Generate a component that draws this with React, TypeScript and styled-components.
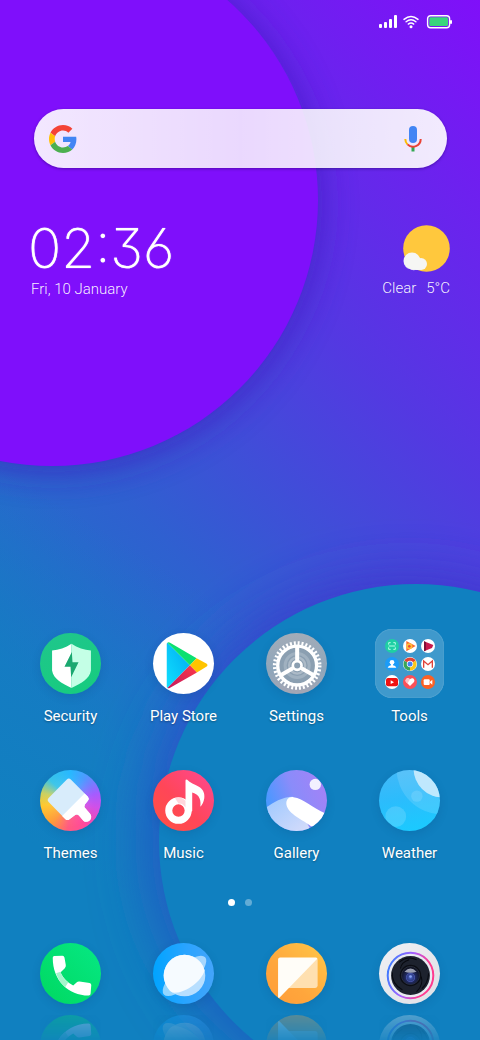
import React from 'react';
import styled, { createGlobalStyle } from 'styled-components';

const GlobalStyle = createGlobalStyle`
  *, *::before, *::after { box-sizing: border-box; }
  body { margin: 0; background: #1080c0; font-family: Roboto, 'Liberation Sans', sans-serif; color: #fff; }
  button { font: inherit; color: inherit; background: none; border: 0; padding: 0; cursor: pointer; }
  svg { display: block; }
`;

const Screen = styled.main`
  position: relative;
  min-height: 100vh;
  overflow: hidden;
  display: flex;
  flex-direction: column;
  isolation: isolate;
`;

const WallpaperArt = styled.svg`
  position: absolute;
  inset: 0;
  width: 100%;
  height: 100%;
  z-index: -1;
`;

const StatusBar = styled.header`
  height: 44px;
  padding: 0 28px;
  display: flex;
  justify-content: flex-end;
  align-items: center;
`;

const SearchBar = styled.form`
  margin: 65px 33px 0 34px;
  height: 59px;
  padding: 0 19px 0 15px;
  display: flex;
  align-items: center;
  border-radius: 30px;
  background: linear-gradient(90deg, rgba(255, 255, 255, 0.9), rgba(255, 255, 255, 0.84) 50%, rgba(255, 255, 255, 0.91));
  box-shadow: 0 1px 3px rgba(30, 0, 90, 0.45);
`;

const SearchInput = styled.input`
  flex: 1;
  min-width: 0;
  height: 100%;
  padding: 0 12px;
  border: 0;
  outline: 0;
  background: transparent;
  color: #333;
  font: 400 18px/24px Roboto, sans-serif;
`;

const Widgets = styled.section`
  margin-top: 47px;
  padding: 0 30px;
  display: flex;
  justify-content: space-between;
  align-items: flex-start;
`;

const Clock = styled.time`
  display: block;
  font: 200 55px/66px Inter, 'Open Sans', sans-serif;
  font-feature-settings: 'cv09', 'cv03', 'cv04';
  text-shadow: 0 0 1px #fff;
`;

const ClockBlock = styled.div`
  display: flex;
  flex-direction: column;
  margin-left: -2px;
`;

const Caption = styled.span<{ $indent?: boolean }>`
  padding-left: ${p => (p.$indent ? 3 : 0)}px;
  font-size: 15px;
  font-weight: 300;
  line-height: 16px;
  color: rgba(255, 255, 255, 0.94);
`;

const WeatherBlock = styled.div`
  display: flex;
  flex-direction: column;
  align-items: flex-end;
  gap: 8px;
  padding-top: 10px;
`;

const WeatherLine = styled.div`
  display: flex;
  gap: 10px;
`;

const Spacer = styled.div`
  flex: 1;
  min-height: 40px;
`;

const AppGrid = styled.nav`
  display: grid;
  grid-template-columns: repeat(4, 1fr);
  row-gap: 40px;
  padding: 0 14px;
`;

const AppButton = styled.button`
  display: flex;
  flex-direction: column;
  align-items: center;
  gap: 8px;
`;

const IconSlot = styled.span`
  height: 69px;
  display: flex;
  align-items: center;
`;

const AppLabel = styled.span`
  font-size: 15px;
  line-height: 20px;
  text-shadow: 0 1px 2px rgba(0, 0, 0, 0.35);
`;

const Disc = styled.span<{ $bg: string }>`
  display: block;
  width: 61px;
  height: 61px;
  border-radius: 50%;
  overflow: hidden;
  background: ${p => p.$bg};
  box-shadow: 0 3px 10px rgba(0, 40, 90, 0.14);
`;

const Folder = styled.span`
  width: 69px;
  height: 69px;
  display: grid;
  grid-template-columns: repeat(3, 14px);
  grid-auto-rows: 14px;
  place-content: center;
  gap: 4px;
  border-radius: 17px;
  background: rgba(255, 255, 255, 0.2);
  box-shadow: inset 0 0 1px rgba(255, 255, 255, 0.5);
`;

const MiniDisc = styled.span<{ $bg: string }>`
  width: 14px;
  height: 14px;
  border-radius: 50%;
  overflow: hidden;
  background: ${p => p.$bg};
`;

const Pager = styled.div`
  margin-top: 36px;
  display: flex;
  justify-content: center;
  gap: 10px;
`;

const PageDot = styled.button<{ $active?: boolean }>`
  width: 7px;
  height: 7px;
  border-radius: 50%;
  && { background: rgba(255, 255, 255, ${p => (p.$active ? 1 : 0.35)}); }
`;

const Dock = styled.nav`
  display: grid;
  grid-template-columns: repeat(4, 1fr);
  padding: 37px 14px 36px;
`;

const DockButton = styled.button`
  justify-self: center;
  -webkit-box-reflect: below 11px linear-gradient(transparent 45%, rgba(0, 0, 0, 0.3));
`;

const Wallpaper = () => (
  <WallpaperArt viewBox="0 0 480 1040" preserveAspectRatio="xMidYMid slice" aria-hidden="true">
    <defs>
      <linearGradient id="sky" gradientUnits="userSpaceOnUse" x1="480" y1="0" x2="-90" y2="570">
        <stop offset="0" stopColor="#800ff9" />
        <stop offset=".42" stopColor="#5438e2" />
        <stop offset=".75" stopColor="#2f60d0" />
        <stop offset="1" stopColor="#1b77c6" />
      </linearGradient>
      <linearGradient id="deep" gradientUnits="userSpaceOnUse" x1="220" y1="600" x2="60" y2="860">
        <stop offset="0" stopColor="#1080c0" stopOpacity="0" />
        <stop offset="1" stopColor="#1080c0" />
      </linearGradient>
      <linearGradient id="halo" gradientUnits="userSpaceOnUse" x1="330" y1="580" x2="200" y2="1000">
        <stop offset="0" stopColor="#4132cc" />
        <stop offset=".3" stopColor="#2f4ccc" />
        <stop offset=".65" stopColor="#235ac4" />
        <stop offset="1" stopColor="#1f60c0" />
      </linearGradient>
      <filter id="soft" x="-30%" y="-30%" width="160%" height="160%"><feGaussianBlur stdDeviation="17" /></filter>
      <filter id="wide" x="-30%" y="-30%" width="160%" height="160%"><feGaussianBlur stdDeviation="26" /></filter>
    </defs>
    <rect width="480" height="1040" fill="url(#sky)" />
    <rect width="480" height="1040" fill="url(#deep)" />
    <circle cx="54" cy="204" r="268" fill="#3c1cc0" opacity=".68" filter="url(#soft)" />
    <circle cx="52" cy="200" r="266" fill="#7f0ffb" />
    <circle cx="408" cy="844" r="264" fill="url(#halo)" filter="url(#wide)" />
    <circle cx="416" cy="841" r="257" fill="#1080c0" />
  </WallpaperArt>
);

const StatusIcons = () => (
  <svg width="73" height="14" viewBox="0 0 73 14" role="img" aria-label="Signal, Wi-Fi and battery">
    <g fill="#fff">
      <rect y="9" width="3" height="4" rx="1" />
      <rect x="5" y="7" width="3" height="6" rx="1" />
      <rect x="10" y="4" width="3" height="9" rx="1" />
      <rect x="15" y="0" width="3" height="13" rx="1" />
      <circle cx="32" cy="11.7" r="1.5" />
      <rect x="71" y="5" width="2" height="4" rx="1" />
    </g>
    <g fill="none" stroke="#fff" strokeWidth="1.4" strokeLinecap="round">
      <path d="M25 4.4Q32-1.6 39 4.4M27.1 6.8Q32 2.6 36.9 6.8M29.3 9.1Q32 6.8 34.7 9.1" />
      <rect x="48.6" y=".7" width="22" height="12" rx="3" />
    </g>
    <rect x="50.3" y="2.3" width="18.7" height="8.8" rx="1.4" fill="#39d57c" />
  </svg>
);

const GoogleLogo = () => (
  <svg width="28" height="28" viewBox="0 0 48 48" aria-hidden="true">
    <path fill="#f44336" d="M24 9.5c3.54 0 6.71 1.22 9.21 3.6l6.85-6.85C35.9 2.38 30.47 0 24 0 14.62 0 6.51 5.38 2.56 13.22l7.98 6.19C12.43 13.72 17.74 9.5 24 9.5z" />
    <path fill="#4285f4" d="M46.98 24.55c0-1.57-.15-3.09-.38-4.55H24v9.02h12.94c-.58 2.96-2.26 5.48-4.78 7.18l7.73 6c4.51-4.18 7.09-10.36 7.09-17.65z" />
    <path fill="#ffc107" d="M10.53 28.59c-.48-1.45-.76-2.99-.76-4.59s.27-3.14.76-4.59l-7.98-6.19C.92 16.46 0 20.12 0 24c0 3.88.92 7.54 2.56 10.78l7.97-6.19z" />
    <path fill="#4caf50" d="M24 48c6.48 0 11.93-2.13 15.89-5.81l-7.73-6c-2.15 1.45-4.92 2.3-8.16 2.3-6.26 0-11.57-4.22-13.47-9.91l-7.98 6.19C6.51 42.62 14.62 48 24 48z" />
  </svg>
);

const MicIcon = () => (
  <svg width="30" height="26" viewBox="0 0 30 26" aria-hidden="true">
    <rect x="11" y="0" width="8" height="17" rx="4" fill="#4285f4" />
    <path d="M15 20v5.500" stroke="#34a853" strokeWidth="3" />
    <path d="M7.3 13a7.700 7.700 0 0 0 2.2 5.4" fill="none" stroke="#fbbc05" strokeWidth="2" />
    <path d="M9.5 18.4A7.700 7.700 0 0 0 22.700 13" fill="none" stroke="#ea4335" strokeWidth="2" />
  </svg>
);

const SunCloud = () => (
  <svg width="47" height="47" viewBox="0 0 47 47" aria-hidden="true">
    <circle cx="23.500" cy="23.500" r="23.300" fill="#ffc83d" />
    <g fill="#f6f6f4">
      <circle cx="9" cy="36" r="8.500" />
      <circle cx="18" cy="39" r="6" />
      <rect x="7" y="37" width="12" height="8" rx="3" />
    </g>
    <path d="M1 38a8.500 8.500 0 0 0 8 6.500h5A10 10 0 0 1 1 38z" fill="#e6e6fa" />
  </svg>
);

const Art = ({ children }: { children: React.ReactNode }) => (
  <svg width="61" height="61" viewBox="0 0 182 182" aria-hidden="true">{children}</svg>
);

const SecurityIcon = () => (
  <Disc $bg="linear-gradient(160deg, #20c68c, #16cc7e)">
    <Art>
      <path d="M94 32C76 45 56 50 36 52V112C40 138 66 150 94 164z" fill="#fff" />
      <path d="M94 32C112 45 132 50 152 52V112C148 138 122 150 94 164z" fill="#c4ffe6" />
      <path d="M95 57L73 101H91L93 132L115 87H97z" fill="#1aa870" />
    </Art>
  </Disc>
);

const PlayIcon = () => (
  <Disc $bg="#fff">
    <Art>
      <defs>
        <linearGradient id="playBlue" x1="1" y1="0" x2="0" y2="1"><stop stopColor="#00a8f0" /><stop offset="1" stopColor="#10e0ff" /></linearGradient>
        <linearGradient id="playRed" x1="1" y1="0" x2="0" y2="1"><stop stopColor="#ff3a48" /><stop offset="1" stopColor="#c2185f" /></linearGradient>
      </defs>
      <path d="M43 29L110 96L43 164Q41 163 41 159V33Q41 30 43 29z" fill="url(#playBlue)" />
      <path d="M43 29Q46 26 51 29L130 75L110 96z" fill="#0be070" />
      <path d="M130 75L159 91Q166 96 159 101L131 118L110 96z" fill="#ffc400" />
      <path d="M131 118L51 163Q46 166 43 164L110 96z" fill="url(#playRed)" />
    </Art>
  </Disc>
);

const SettingsIcon = () => (
  <Disc $bg="linear-gradient(180deg, #a3acb8, #8ea6bb 60%, #a5a6b4)">
    <Art>
      <g fill="none">
        <circle cx="93" cy="97" r="53" fill="#8b9fb1" />
        <circle cx="93" cy="97" r="36" stroke="#a0b1c0" strokeWidth="9" />
        <circle cx="93" cy="97" r="24" stroke="#acbac7" strokeWidth="7" />
        <circle cx="93" cy="97" r="58" stroke="#fff" strokeWidth="10" />
        <circle cx="93" cy="97" r="67" stroke="#fff" strokeWidth="11" pathLength="72" strokeDasharray="1 1" />
        <path d="M93 82V42M80 105L45 125M106 105L141 125" stroke="#fff" strokeWidth="12" />
        <circle cx="93" cy="97" r="13" fill="#8b9fb1" stroke="#fff" strokeWidth="8" />
      </g>
    </Art>
  </Disc>
);

const ThemesIcon = () => (
  <Disc $bg="radial-gradient(circle at 45% 50%, rgba(255,255,255,0.15), transparent 60%), conic-gradient(from 0deg, #28b8ff 0deg, #4a9cff 30deg, #a45cff 75deg, #d050e8 105deg, #ff4a9c 150deg, #ff5a80 185deg, #ff9a38 220deg, #ffc82c 260deg, #c8d060 285deg, #38c4e8 315deg, #28b8ff 360deg)">
    <Art>
      <path d="M80 28Q86 22 92 28L143 80Q148 86 143 92L134 103Q130 110 136 115L150 131Q156 140 149 150Q139 158 130 152L116 136Q110 130 103 136L88 147Q82 152 76 147L25 95Q20 89 25 84z" fill="#d8ecfb" />
      <path d="M133 70L143 80Q148 86 143 92L134 103Q130 110 136 115L150 131Q156 140 149 150Q139 158 130 152L116 136Q110 130 103 136L88 147Q82 152 76 147L66 137z" fill="#fff" />
    </Art>
  </Disc>
);

const MusicIcon = () => (
  <Disc $bg="linear-gradient(225deg, #ff4894, #ff4658 55%, #ff5240)">
    <Art>
      <circle cx="76" cy="121" r="29" fill="none" stroke="#fff" strokeWidth="21" />
      <path d="M97 88V32Q97 27 102 29C110 38 124 42 137 50C150 58 155 70 153 84C151 96 147 104 141 110C144 92 140 73 117 67V122A20 20 0 0 1 96 125z" fill="#fff" />
      <path d="M66 84Q84 78 97 92V112Q88 98 76 100z" fill="#ffc4cd" opacity=".7" />
    </Art>
  </Disc>
);

const GalleryIcon = () => (
  <Disc $bg="linear-gradient(70deg, #4a98ff 15%, #8a8cfa 50%, #a880f6)">
    <Art>
      <defs>
        <linearGradient id="hill" x1="0" y1="0" x2="1" y2="1"><stop stopColor="#9cc8ff" /><stop offset="1" stopColor="#d6dcfa" /></linearGradient>
      </defs>
      <path d="M0 112C22 98 48 80 80 80L130 172L120 182H0z" fill="url(#hill)" />
      <path d="M61 104C59 88 68 79 82 81C112 85 138 112 178 130L160 170L134 168C112 150 66 132 61 104z" fill="#fff" />
      <circle cx="147" cy="43" r="17" fill="#f3f1ff" />
    </Art>
  </Disc>
);

const WeatherIcon = () => (
  <Disc $bg="linear-gradient(170deg, #44b8f8, #2cbcfc 45%, #18ccff)">
    <Art>
      <circle cx="190" cy="-5" r="138" fill="#fff" opacity=".13" />
      <circle cx="190" cy="-5" r="87" fill="#d4effd" opacity=".85" />
      <circle cx="113" cy="78" r="17" fill="#fff" opacity=".13" />
      <circle cx="50" cy="139" r="31" fill="#fff" opacity=".15" />
    </Art>
  </Disc>
);

const PhoneIcon = () => (
  <Disc $bg="linear-gradient(225deg, #06e884, #00d860)">
    <Art>
      <path d="M38 44Q38 39 43 39L67 38Q72 38 73 43L77 66Q78 71 74 75L61 88Q74 114 99 127L109 118Q113 114 118 115L148 119Q153 120 153 125L151 151Q151 157 145 157C84 156 38 112 38 44z" fill="#fff" />
      <path d="M48 90L61 86Q68 106 84 118L75 132Q56 116 48 90z" fill="#a5f5cc" />
    </Art>
  </Disc>
);

const BrowserIcon = () => (
  <Disc $bg="linear-gradient(90deg, #00a4ff, #2aa4ff 55%, #44a4fa)">
    <Art>
      <ellipse cx="94" cy="98" rx="83" ry="31" transform="rotate(-42 94 98)" fill="#fff" opacity=".55" />
      <circle cx="94" cy="97" r="62" fill="#c6e6ff" opacity=".9" />
      <path d="M44 134A62 62 0 1 1 154 82C146 112 98 152 58 148Q50 144 44 134z" fill="#f6fbff" />
    </Art>
  </Disc>
);

const MessagesIcon = () => (
  <Disc $bg="linear-gradient(225deg, #ffc848, #ffa63c 60%, #ff9c38)">
    <Art>
      <path d="M66 134L100 60L154 46V127Q154 134 147 134z" fill="#ffe0b0" />
      <path d="M36 49Q36 43 42 43H148Q152 43 153 47L40 163Q36 166 36 161z" fill="#fffdf8" />
    </Art>
  </Disc>
);

const CameraIcon = () => (
  <Disc $bg="linear-gradient(135deg, #f0f0f4, #dfe0e6)">
    <Art>
      <defs>
        <linearGradient id="ring" x1="0" y1=".3" x2="1" y2=".6"><stop stopColor="#3c7cff" /><stop offset=".45" stopColor="#a860ff" /><stop offset=".8" stopColor="#ff3c90" /></linearGradient>
        <radialGradient id="glass" cx=".5" cy=".6" r=".55"><stop stopColor="#4a64cc" /><stop offset=".5" stopColor="#202a60" /><stop offset="1" stopColor="#10121e" /></radialGradient>
      </defs>
      <circle cx="94" cy="97" r="68" fill="#e9ebf1" stroke="url(#ring)" strokeWidth="6" />
      <circle cx="94" cy="97" r="58" fill="#1d222e" />
      <path d="M60 58Q84 36 112 50M40 88Q36 120 70 140M148 90Q146 120 128 136M64 76Q66 58 90 50M126 100Q134 124 112 146" fill="none" stroke="#07090f" strokeWidth="3" />
      <circle cx="94" cy="97" r="32" fill="#0b0d14" />
      <circle cx="94" cy="97" r="27" fill="url(#glass)" stroke="#333a4c" strokeWidth="2" />
      <path d="M76 86Q94 66 112 86Q94 92 76 86z" fill="#b4b7c4" opacity=".85" />
      <circle cx="94" cy="103" r="12" fill="none" stroke="#5865c8" strokeWidth="2" />
      <circle cx="94" cy="100" r="4" fill="#88a0f0" />
    </Art>
  </Disc>
);

const Mini = ({ bg, children }: { bg: string; children: React.ReactNode }) => (
  <MiniDisc $bg={bg}>
    <svg width="14" height="14" viewBox="0 0 42 42" aria-hidden="true">{children}</svg>
  </MiniDisc>
);

const ToolsIcon = () => (
  <Folder>
    <Mini bg="#1fcfa4">
      <path d="M11 17V11H17M25 11H31V17M31 25V31H25M17 31H11V25M11 21H31" fill="none" stroke="#b8ffe8" strokeWidth="3" />
    </Mini>
    <Mini bg="#fff">
      <path d="M10 6L38 21L10 37z" fill="#ff6a2a" />
      <circle cx="19" cy="22" r="9" fill="#ffc23a" />
      <circle cx="19" cy="22" r="4" fill="#f04a3a" />
    </Mini>
    <Mini bg="#fff">
      <path d="M9 7L37 18L33 27L9 37z" fill="#c8184c" />
      <path d="M9 7L15 10V34L9 37z" fill="#7e1038" />
    </Mini>
    <Mini bg="#1c9cf8">
      <circle cx="21" cy="16" r="7" fill="#fff" />
      <path d="M8 32Q10 26 18 25V20H24V25Q32 26 34 32z" fill="#fff" />
    </Mini>
    <Mini bg="#fff">
      <path d="M21 21L4 11A20 20 0 0 1 38 11z" fill="#e04436" />
      <path d="M21 21L38 11A20 20 0 0 1 21 41z" fill="#fbc61a" />
      <path d="M21 21V41A20 20 0 0 1 4 11z" fill="#3aa657" />
      <circle cx="21" cy="21" r="9.500" fill="#fff" />
      <circle cx="21" cy="21" r="7.500" fill="#4285f4" />
    </Mini>
    <Mini bg="#fff">
      <path d="M8 32V12L21 23L34 12V32" fill="none" stroke="#e0443a" strokeWidth="4" />
    </Mini>
    <Mini bg="#fff">
      <rect x="3" y="9" width="36" height="25" rx="6" fill="#f01212" />
      <path d="M17 16L27 21.500L17 27z" fill="#fff" />
    </Mini>
    <Mini bg="#fb5058">
      <path d="M21 33L9 21C4 12 15 5 21 13C27 5 38 12 33 21z" fill="#fff" />
      <path d="M9 21C4 12 15 5 21 13L14 25z" fill="#ffc0c4" />
    </Mini>
    <Mini bg="#fb6124">
      <rect x="8" y="13" width="18" height="17" rx="3" fill="#fff" />
      <path d="M27 20L34 14V29L27 23z" fill="#fff" />
    </Mini>
  </Folder>
);

const apps = [
  { name: 'Security', Icon: SecurityIcon },
  { name: 'Play Store', Icon: PlayIcon },
  { name: 'Settings', Icon: SettingsIcon },
  { name: 'Tools', Icon: ToolsIcon },
  { name: 'Themes', Icon: ThemesIcon },
  { name: 'Music', Icon: MusicIcon },
  { name: 'Gallery', Icon: GalleryIcon },
  { name: 'Weather', Icon: WeatherIcon },
];

const dockApps = [
  { name: 'Phone', Icon: PhoneIcon },
  { name: 'Browser', Icon: BrowserIcon },
  { name: 'Messages', Icon: MessagesIcon },
  { name: 'Camera', Icon: CameraIcon },
];

export default function App() {
  return (
    <>
      <GlobalStyle />
      <Screen>
        <Wallpaper />
        <StatusBar><StatusIcons /></StatusBar>
        <SearchBar role="search" onSubmit={e => e.preventDefault()}>
          <GoogleLogo />
          <SearchInput type="text" aria-label="Search" />
          <button type="button" aria-label="Voice search"><MicIcon /></button>
        </SearchBar>
        <Widgets>
          <ClockBlock>
            <Clock>02:36</Clock>
            <Caption $indent>Fri, 10 January</Caption>
          </ClockBlock>
          <WeatherBlock>
            <SunCloud />
            <WeatherLine>
              <Caption>Clear</Caption>
              <Caption>5°C</Caption>
            </WeatherLine>
          </WeatherBlock>
        </Widgets>
        <Spacer />
        <AppGrid aria-label="Apps">
          {apps.map(({ name, Icon }) => (
            <AppButton key={name} type="button">
              <IconSlot><Icon /></IconSlot>
              <AppLabel>{name}</AppLabel>
            </AppButton>
          ))}
        </AppGrid>
        <Pager>
          <PageDot type="button" aria-label="Page 1" $active />
          <PageDot type="button" aria-label="Page 2" />
        </Pager>
        <Dock aria-label="Dock">
          {dockApps.map(({ name, Icon }) => (
            <DockButton key={name} type="button" aria-label={name}><Icon /></DockButton>
          ))}
        </Dock>
      </Screen>
    </>
  );
}
